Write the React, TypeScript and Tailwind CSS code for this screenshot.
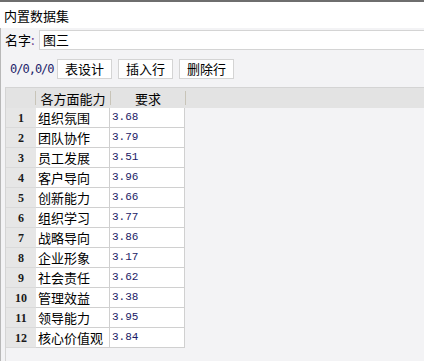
import React from "react";

const rows: [string, string][] = [
  ["组织氛围", "3.68"],
  ["团队协作", "3.79"],
  ["员工发展", "3.51"],
  ["客户导向", "3.96"],
  ["创新能力", "3.66"],
  ["组织学习", "3.77"],
  ["战略导向", "3.86"],
  ["企业形象", "3.17"],
  ["社会责任", "3.62"],
  ["管理效益", "3.38"],
  ["领导能力", "3.95"],
  ["核心价值观", "3.84"],
];

const cjk = { fontFamily: '"Noto Sans CJK SC", "Noto Sans", sans-serif' };
const mono = { fontFamily: '"Liberation Mono", "DejaVu Sans Mono", monospace' };
const serif = { fontFamily: '"Liberation Serif", "Noto Serif", serif' };

export default function App() {
  return (
    <div className="w-[424px] h-[361px] overflow-hidden bg-[#f3f3f5] flex flex-col border-t-[2px] border-[#6e6e6e]" style={cjk}>
      <div className="h-[26px] bg-white flex items-center pl-[4px] text-[13px] text-black leading-none">
        内置数据集
      </div>
      <div className="flex-1 flex flex-col border-l border-[#b8b8b8]">
        <div className="h-[21px] mt-[1px] flex items-center">
          <span className="w-[38px] pl-[4px] text-[13px] text-black leading-none">
            名字<span className="text-[#6a3a8a]">:</span>
          </span>
          <div className="flex-1 h-[20px] bg-white border border-[#d4d4d4] border-r-0 flex items-center pl-[3px] text-[13px] leading-none">
            图三
          </div>
        </div>
        <div className="h-[37px] flex items-center">
          <span className="pl-[9px] w-[56px] text-[12px] tracking-[-1px] text-[#1e1e6a] leading-none" style={{ fontFamily: '"DejaVu Sans Mono", monospace' }}>0/0,0/0</span>
          <div className="flex gap-[6px]">
            {["表设计", "插入行", "删除行"].map((t) => (
              <div key={t} className="w-[55px] h-[20px] bg-white border border-[#d4d4d4] flex items-center justify-center text-[13px] leading-none text-black">
                {t}
              </div>
            ))}
          </div>
        </div>
        <div className="flex-1 ml-[4px] border-t border-l border-[#d4d4d4] flex flex-col">
          <div className="h-[20px] bg-[#e3e3e3] flex items-center text-[13px] leading-none">
            <div className="w-[30px] h-full flex items-center justify-end">
              <span className="w-px h-[14px] bg-[#c8c4b8]" />
            </div>
            <div className="w-[74px] h-full flex items-center justify-center">各方面能力</div>
            <span className="w-px h-[14px] bg-[#c8c4b8]" />
            <div className="w-[74px] h-full flex items-center justify-center">要求</div>
            <span className="w-px h-[14px] bg-[#c8c4b8]" />
          </div>
          <div className="flex flex-col">
            {rows.map(([name, val], i) => (
              <div key={i} className="h-[20px] flex">
                <div className="w-[30px] h-full bg-[#e6e6e6] border-b border-[#dadada] flex items-center justify-center text-[12px] font-bold text-[#1a1a1a] leading-none" style={serif}>
                  {i + 1}
                </div>
                <div className="w-[74px] h-full bg-white border-b border-r border-[#d0d0d0] flex items-center pl-[2px] text-[13px] text-black leading-none">
                  {name}
                </div>
                <div className="w-[75px] h-full bg-white border-b border-r border-[#d0d0d0] flex items-center pl-[2px] text-[11px] text-[#1a1a66] leading-none" style={mono}>
                  {val}
                </div>
              </div>
            ))}
          </div>
        </div>
      </div>
    </div>
  );
}
